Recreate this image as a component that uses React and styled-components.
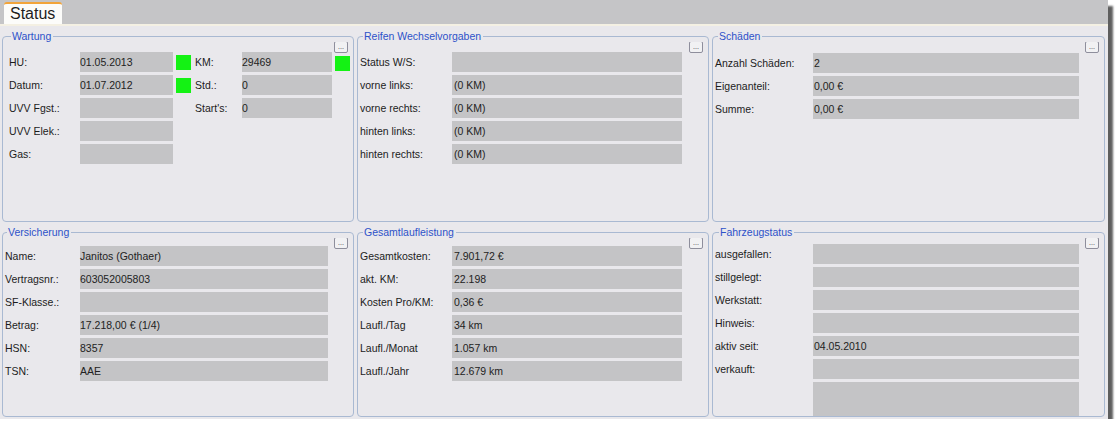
import React from 'react'
import styled, { createGlobalStyle } from 'styled-components'

const GlobalStyle = createGlobalStyle`
  body {
    margin: 0;
    background: #ffffff;
    font-family: "Liberation Sans", Arial, sans-serif;
  }
`

const Window = styled.div`
  width: 1108px;
  height: 419px;
  background: #e9e8ec;
  box-shadow: 5px 6px 2px rgba(40, 40, 40, 0.75);
  overflow: hidden;
`

const Header = styled.div`
  height: 24px;
  background: #c5c5c7;
  display: flex;
  align-items: flex-end;
  padding-left: 4px;
  border-bottom: 2px solid #f4f0e3;
`

const Tab = styled.div`
  width: 58px;
  height: 22px;
  box-sizing: border-box;
  background: #fcfcfa;
  border-top: 2px solid #f2a43a;
  border-radius: 3px 3px 0 0;
  font-size: 16px;
  line-height: 20px;
  color: #1e1e1e;
  padding-left: 6px;
`

const Grid = styled.div`
  display: grid;
  grid-template-columns: 352px 352px 393px;
  grid-template-rows: 192px 191px;
  column-gap: 3px;
  row-gap: 4px;
  padding: 4px 2px 0 2px;
`

const Panel = styled.fieldset`
  position: relative;
  margin: 0;
  min-width: 0;
  box-sizing: border-box;
  border: 1px solid #a9b9d2;
  border-radius: 4px;
  padding: ${p => p.$top}px 0 0 ${p => p.$left}px;
  overflow: hidden;
`

const Legend = styled.legend`
  font-size: 10.5px;
  line-height: 12px;
  color: #2d52c9;
  padding: 0 2px 0 1px;
  margin-left: ${p => p.$shift ?? 3}px;
`

const MoreButton = styled.button`
  position: absolute;
  top: -1px;
  right: 5px;
  width: 14px;
  height: 12px;
  padding: 0;
  box-sizing: border-box;
  border: 1px solid #8e8e9c;
  border-radius: 2px;
  background: #f1f1f3;
  font-size: 7px;
  line-height: 6px;
  color: #333;
  font-family: "Liberation Sans", Arial, sans-serif;
`

const Columns = styled.div`
  display: flex;
`

const Column = styled.div`
  display: flex;
  flex-direction: column;
  gap: 3px;
  margin-right: ${p => p.$gap || 0}px;
`

const Row = styled.div`
  display: flex;
  align-items: center;
  height: ${p => p.$h || 20}px;
  flex-shrink: 0;
`

const Label = styled.div`
  width: ${p => p.$w}px;
  flex-shrink: 0;
  font-size: 10.5px;
  color: #1c1c1c;
  white-space: nowrap;
`

const Value = styled.div`
  width: ${p => p.$w}px;
  height: 100%;
  box-sizing: border-box;
  background: #c4c4c6;
  font-size: 10.5px;
  line-height: 20px;
  color: #222;
  padding-left: ${p => p.$pad ?? 2}px;
  white-space: nowrap;
`

const Indicator = styled.div`
  width: 15px;
  height: 15px;
  background: #14f214;
  margin-left: 3px;
  margin-top: ${p => p.$drop || 0}px;
`

const Field = ({ label, value, lw, vw, pad, h, green, drop }) => (
  <Row $h={h}>
    <Label $w={lw}>{label}</Label>
    <Value $w={vw} $pad={pad}>{value}</Value>
    {green && <Indicator $drop={drop} />}
  </Row>
)

const SimplePanel = ({ title, top, left = 2, shift, lw, vw, pad, rows }) => (
  <Panel $top={top} $left={left}>
    <Legend $shift={shift}>{title}</Legend>
    <MoreButton>...</MoreButton>
    <Column>
      {rows.map(([label, value, h], i) => (
        <Field key={i} label={label} value={value} lw={lw} vw={vw} pad={pad} h={h} />
      ))}
    </Column>
  </Panel>
)

const reifen = [
  ['Status W/S:', ''],
  ['vorne links:', '(0 KM)'],
  ['vorne rechts:', '(0 KM)'],
  ['hinten links:', '(0 KM)'],
  ['hinten rechts:', '(0 KM)'],
]

const schaeden = [
  ['Anzahl Schäden:', '2'],
  ['Eigenanteil:', '0,00 €'],
  ['Summe:', '0,00 €'],
]

const versicherung = [
  ['Name:', 'Janitos (Gothaer)'],
  ['Vertragsnr.:', '603052005803'],
  ['SF-Klasse.:', ''],
  ['Betrag:', '17.218,00 € (1/4)'],
  ['HSN:', '8357'],
  ['TSN:', 'AAE'],
]

const laufleistung = [
  ['Gesamtkosten:', '7.901,72 €'],
  ['akt. KM:', '22.198'],
  ['Kosten Pro/KM:', '0,36 €'],
  ['Laufl./Tag', '34 km'],
  ['Laufl./Monat', '1.057 km'],
  ['Laufl./Jahr', '12.679 km'],
]

const fahrzeug = [
  ['ausgefallen:', ''],
  ['stillgelegt:', ''],
  ['Werkstatt:', ''],
  ['Hinweis:', ''],
  ['aktiv seit:', '04.05.2010'],
  ['verkauft:', ''],
  ['', '', 40],
]

const App = () => {
  return (
    <>
      <GlobalStyle />
      <Window>
        <Header>
          <Tab>Status</Tab>
        </Header>
        <Grid>
          <Panel $top={10} $left={6}>
            <Legend $shift={2}>Wartung</Legend>
            <MoreButton>...</MoreButton>
            <Columns>
              <Column $gap={4}>
                <Field label="HU:" value="01.05.2013" lw={71} vw={93} pad={0} green />
                <Field label="Datum:" value="01.07.2012" lw={71} vw={93} pad={0} green />
                <Field label="UVV Fgst.:" value="" lw={71} vw={93} />
                <Field label="UVV Elek.:" value="" lw={71} vw={93} />
                <Field label="Gas:" value="" lw={71} vw={93} />
              </Column>
              <Column>
                <Field label="KM:" value="29469" lw={47} vw={90} pad={0} green drop={3} />
                <Field label="Std.:" value="0" lw={47} vw={90} pad={0} />
                <Field label="Start's:" value="0" lw={47} vw={90} pad={0} />
              </Column>
            </Columns>
          </Panel>
          <SimplePanel title="Reifen Wechselvorgaben" top={10} lw={92} vw={230} rows={reifen} />
          <SimplePanel title="Schäden" top={11} lw={98} vw={266} pad={1} rows={schaeden} />
          <SimplePanel title="Versicherung" top={8} shift={2} lw={75} vw={248} pad={0} rows={versicherung} />
          <SimplePanel title="Gesamtlaufleistung" top={8} lw={92} vw={230} rows={laufleistung} />
          <SimplePanel title="Fahrzeugstatus" top={6} shift={4} lw={98} vw={266} pad={1} rows={fahrzeug} />
        </Grid>
      </Window>
    </>
  )
}

export default App
